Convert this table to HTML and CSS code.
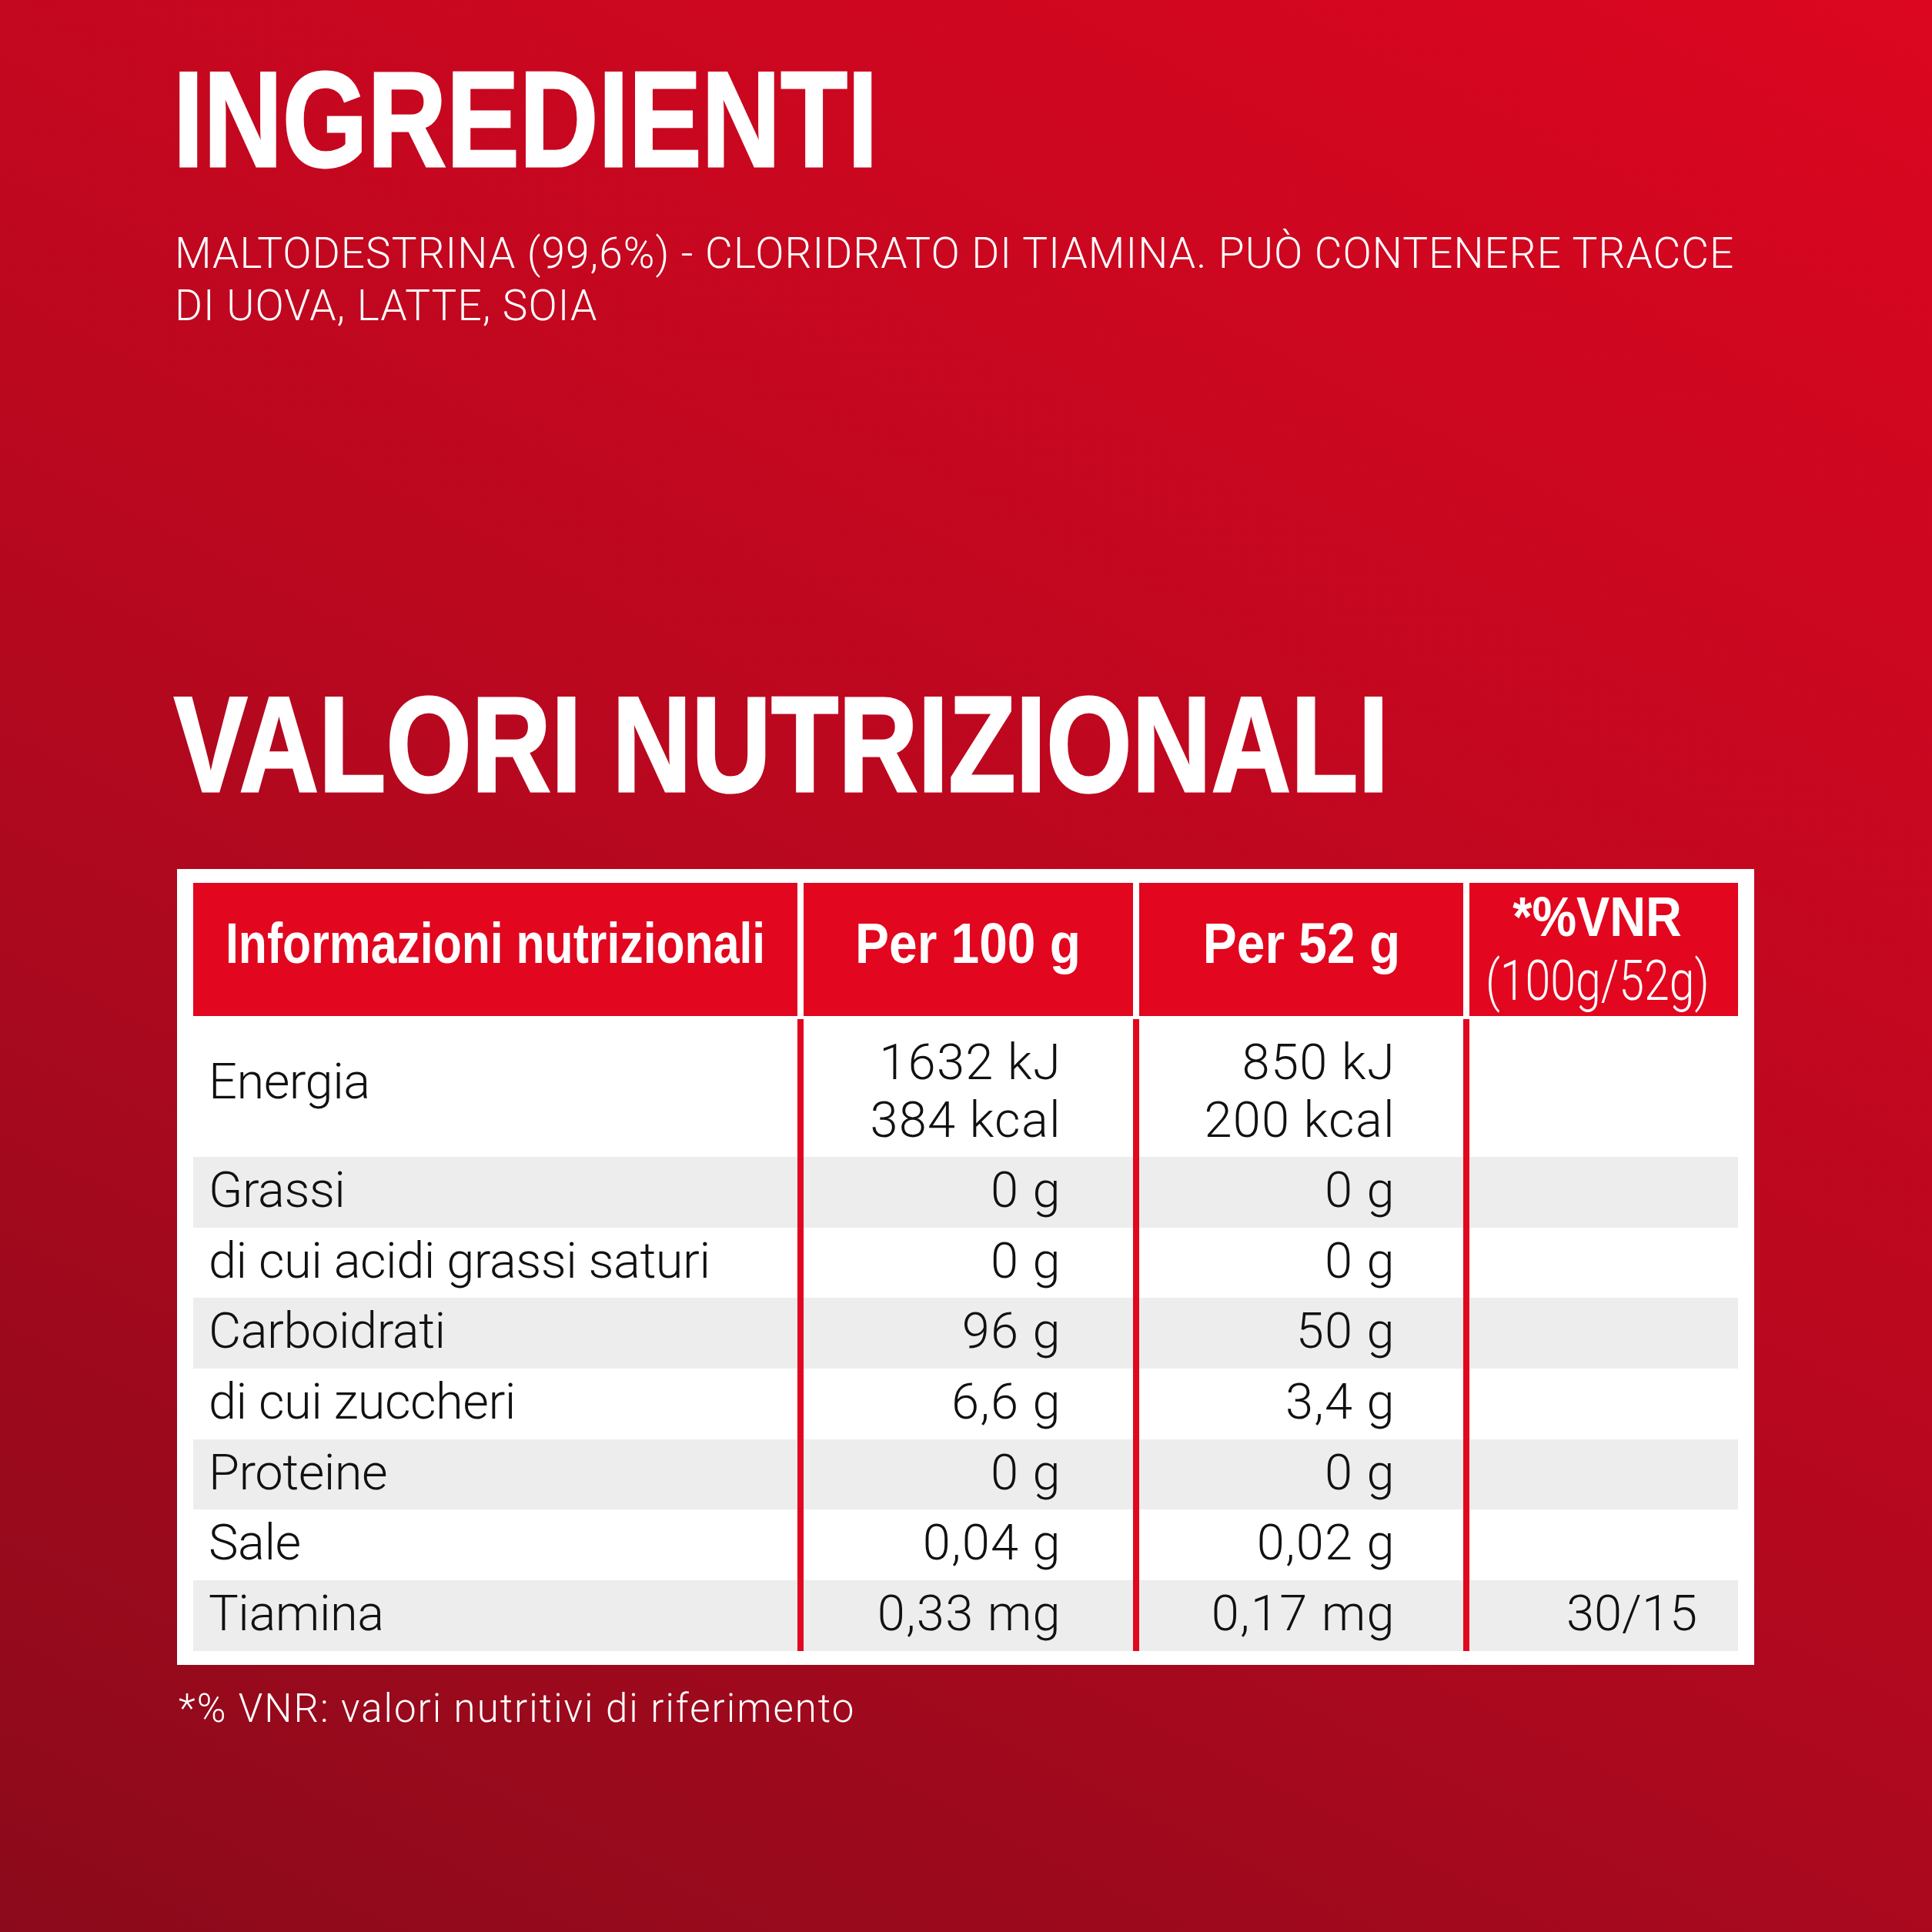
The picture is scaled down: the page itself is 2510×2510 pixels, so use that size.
FILE: index.html
```html
<!DOCTYPE html>
<html lang="it">
<head>
<meta charset="utf-8">
<title>Ingredienti e valori nutrizionali</title>
<link rel="stylesheet" href="styles.css">
</head>
<body>
<main class="page">
  <h1 class="title title-ingr">INGREDIENTI</h1>
  <p class="ingr"><span class="ingr-line">MALTODESTRINA (99,6%) - CLORIDRATO DI TIAMINA. PUÒ CONTENERE TRACCE</span><br><span class="ingr-line">DI UOVA, LATTE, SOIA</span></p>

  <h1 class="title title-val">VALORI NUTRIZIONALI</h1>

  <section class="nutri">
    <div class="thead">
      <div class="th"><span class="th-text th-info">Informazioni nutrizionali</span></div>
      <div class="th"><span class="th-text th-per">Per 100 g</span></div>
      <div class="th"><span class="th-text th-per">Per 52 g</span></div>
      <div class="th th-vnr"><span class="th-text th-vnrb">*%VNR</span><span class="th-sub">(100g/52g)</span></div>
    </div>
    <div class="tbody">
      <div class="tr tr-energy">
        <div class="td label">Energia</div>
        <div class="td val two">1632 kJ<br>384 kcal</div>
        <div class="td val val3 two">850 kJ<br>200 kcal</div>
        <div class="td val val4"></div>
      </div>
      <div class="tr alt">
        <div class="td label">Grassi</div>
        <div class="td val">0 g</div>
        <div class="td val val3">0 g</div>
        <div class="td val val4"></div>
      </div>
      <div class="tr">
        <div class="td label">di cui acidi grassi saturi</div>
        <div class="td val">0 g</div>
        <div class="td val val3">0 g</div>
        <div class="td val val4"></div>
      </div>
      <div class="tr alt">
        <div class="td label">Carboidrati</div>
        <div class="td val">96 g</div>
        <div class="td val val3">50 g</div>
        <div class="td val val4"></div>
      </div>
      <div class="tr">
        <div class="td label">di cui zuccheri</div>
        <div class="td val">6,6 g</div>
        <div class="td val val3">3,4 g</div>
        <div class="td val val4"></div>
      </div>
      <div class="tr alt">
        <div class="td label">Proteine</div>
        <div class="td val">0 g</div>
        <div class="td val val3">0 g</div>
        <div class="td val val4"></div>
      </div>
      <div class="tr">
        <div class="td label">Sale</div>
        <div class="td val">0,04 g</div>
        <div class="td val val3">0,02 g</div>
        <div class="td val val4"></div>
      </div>
      <div class="tr alt">
        <div class="td label">Tiamina</div>
        <div class="td val">0,33 mg</div>
        <div class="td val val3">0,17 mg</div>
        <div class="td val val4">30/15</div>
      </div>
    </div>
  </section>

  <p class="note">*% VNR: valori nutritivi di riferimento</p>
</main>
</body>
</html>
```

FILE: styles.css
```css
html, body {
  margin: 0;
  padding: 0;
}

body {
  width: 2510px;
  height: 2510px;
  overflow: hidden;
  background: linear-gradient(207deg, #dc0620 0%, #b8081f 50%, #8b0a1b 100%);
  color: #fff;
}

.page {
  padding: 67px 0 0 230px;
  box-sizing: border-box;
  width: 2510px;
  height: 2510px;
}

.title {
  margin: 0;
  font-family: "Liberation Sans", Arial, sans-serif;
  font-weight: 700;
  font-size: 176px;
  line-height: 1;
  color: #fff;
  -webkit-text-stroke: 3px #fff;
  transform-origin: left center;
  transform: scaleX(0.807);
  white-space: nowrap;
}

.title-ingr {
  margin-left: -5px;
}

.title-val {
  margin-top: 448px;
  margin-left: -4px;
  transform: scaleX(0.8125);
}

.ingr {
  margin: 52px 0 0 -3px;
  font-family: "Roboto", "Liberation Sans", sans-serif;
  font-weight: 300;
  font-size: 55px;
  line-height: 68px;
  color: #fff;
  white-space: nowrap;
  letter-spacing: 1.05px;
}

.nutri {
  margin-top: 74px;
  width: 2049px;
  height: 1034px;
  box-sizing: border-box;
  padding: 18px 21px;
  background: #fff;
}

.thead,
.tbody {
  display: grid;
  grid-template-columns: 785px 428px 421px 349px;
  column-gap: 8px;
}

.thead {
  height: 173px;
}

.th {
  background: #e2061f;
  color: #fff;
  display: flex;
  align-items: center;
  justify-content: center;
  padding-bottom: 16px;
  box-sizing: border-box;
}

.th-text {
  display: inline-block;
  font-family: "Liberation Sans", Arial, sans-serif;
  font-weight: 700;
  font-size: 74px;
  line-height: 1;
  white-space: nowrap;
}

.th-info {
  transform: scaleX(0.82);
}

.th-per {
  transform: scaleX(0.89);
}

.th-vnr {
  flex-direction: column;
  padding-bottom: 0;
  padding-right: 16px;
}

.th-vnrb {
  font-size: 72px;
  line-height: 81px;
  transform: scaleX(0.9);
}

.th-sub {
  display: inline-block;
  font-family: "Roboto", "Liberation Sans", sans-serif;
  font-weight: 300;
  font-size: 72px;
  line-height: 85px;
  white-space: nowrap;
  transform: scaleX(0.82);
}

.tbody {
  margin-top: 4px;
  background: #e2061f;
  grid-template-rows: 179px repeat(7, 91.7px);
}

.tr {
  display: contents;
}

.td {
  background: #fff;
  color: #111;
  font-family: "Roboto", "Liberation Sans", sans-serif;
  font-weight: 300;
  font-size: 65px;
  line-height: 76px;
  display: flex;
  align-items: center;
  white-space: nowrap;
  box-sizing: border-box;
  padding-bottom: 6px;
}

.tr.alt .td {
  background: #ededed;
}

.label {
  padding-left: 20px;
  letter-spacing: -0.5px;
}

.val {
  justify-content: flex-end;
  text-align: right;
  padding-right: 93px;
  letter-spacing: 1.3px;
}

.val3 {
  padding-right: 88px;
}

.val4 {
  padding-right: 53px;
  letter-spacing: 0;
}

.tr-energy .label {
  padding-bottom: 18px;
}

.two {
  line-height: 75px;
  padding-top: 8px;
  padding-bottom: 0;
}

.note {
  margin: 26px 0 0 2px;
  font-family: "Roboto", "Liberation Sans", sans-serif;
  font-weight: 300;
  font-size: 51px;
  line-height: 1.2;
  letter-spacing: 2px;
  color: #fff;
  white-space: nowrap;
}
```
